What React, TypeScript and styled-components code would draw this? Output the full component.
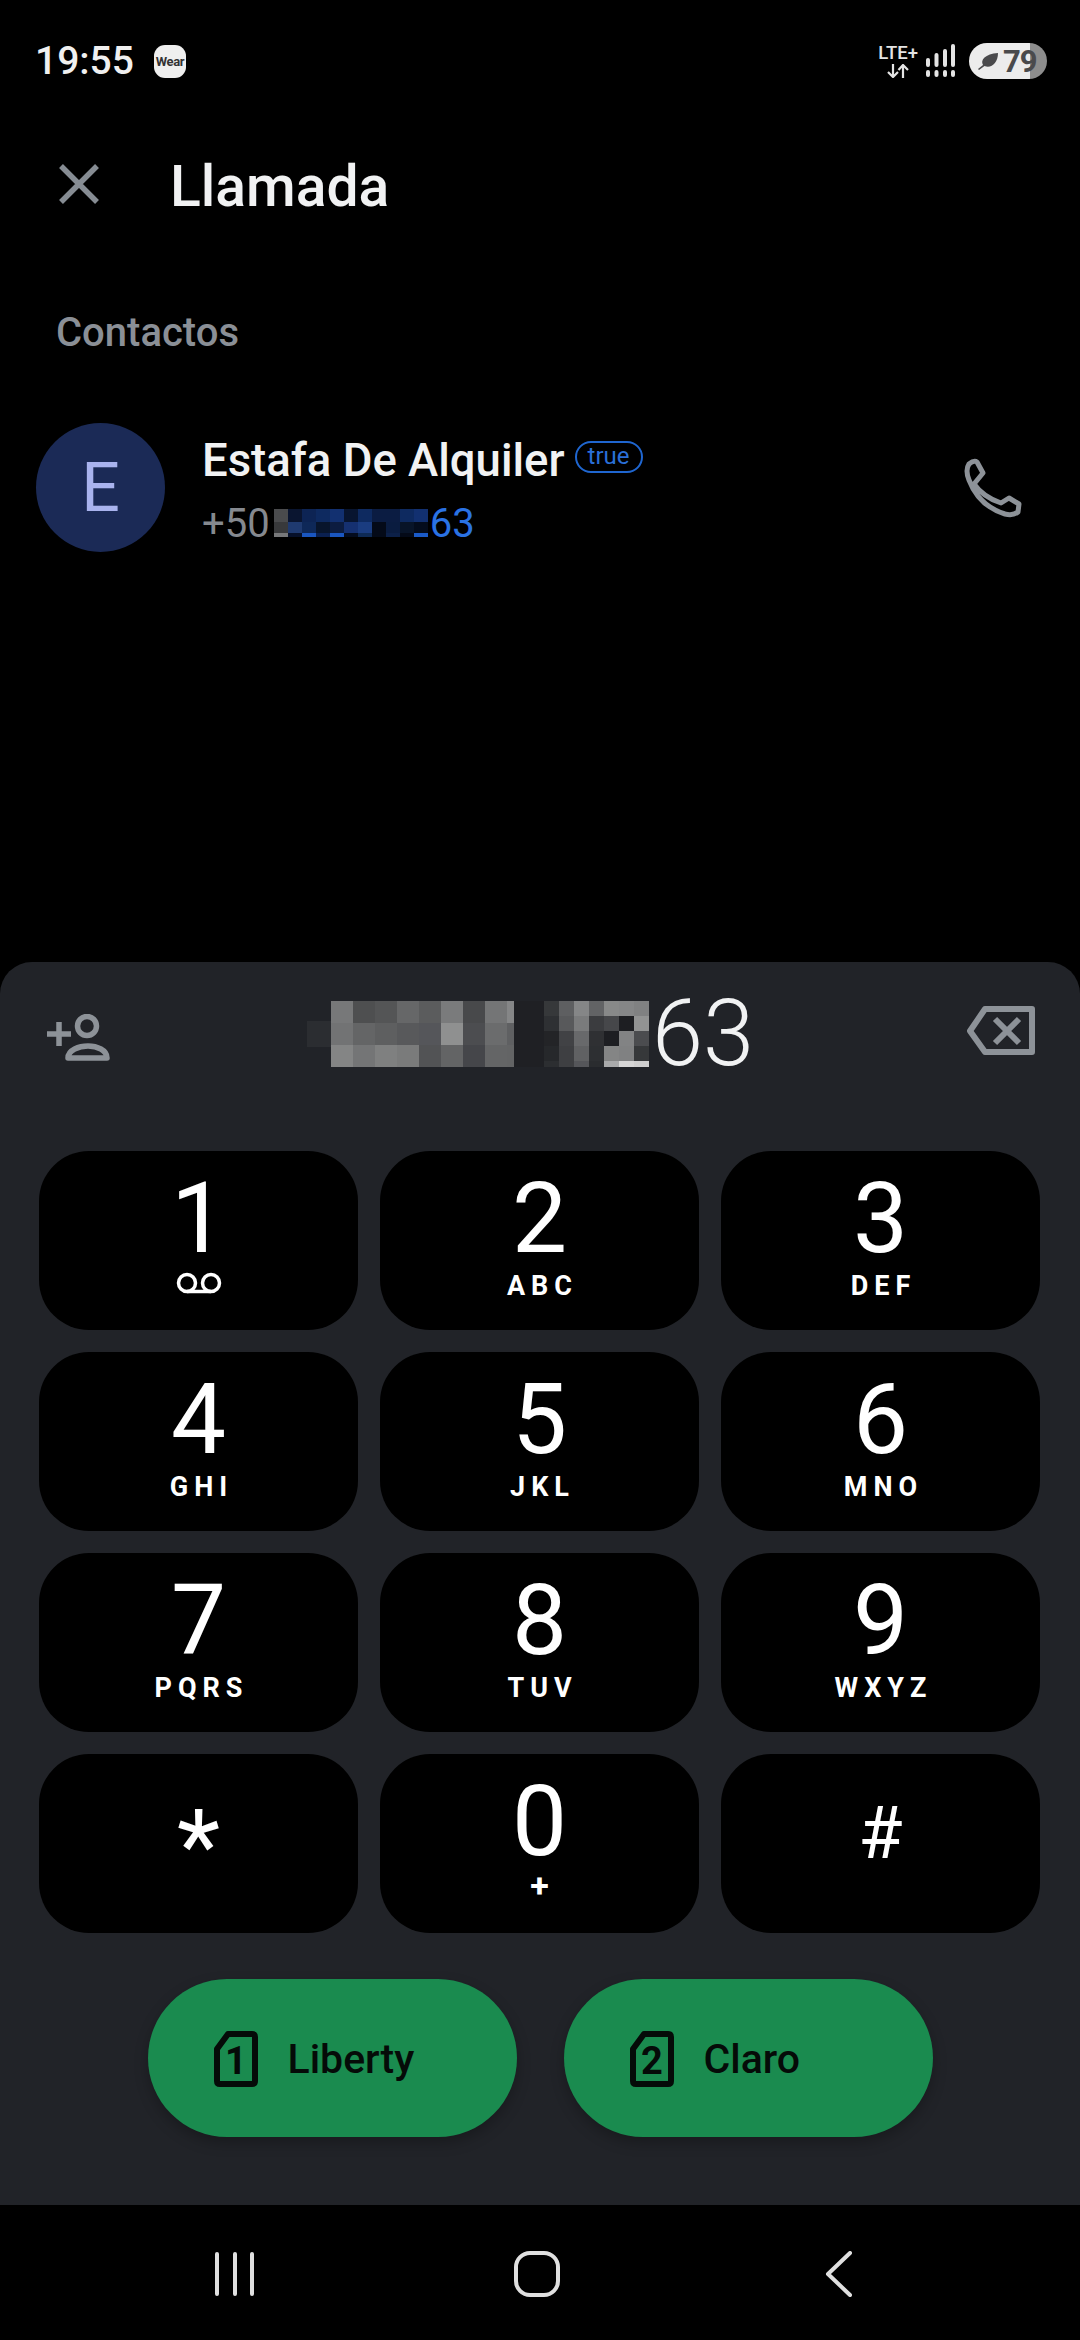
import React from "react";
import styled, { createGlobalStyle } from "styled-components";

const GlobalStyle = createGlobalStyle`
  html, body {
    margin: 0;
    padding: 0;
    background: #000;
  }
  * {
    box-sizing: border-box;
  }
`;

const keys = [
  { digit: "1", voicemail: true },
  { digit: "2", label: "ABC" },
  { digit: "3", label: "DEF" },
  { digit: "4", label: "GHI" },
  { digit: "5", label: "JKL" },
  { digit: "6", label: "MNO" },
  { digit: "7", label: "PQRS" },
  { digit: "8", label: "TUV" },
  { digit: "9", label: "WXYZ" },
  { digit: "*", symbol: "star" },
  { digit: "0", label: "+", plus: true },
  { digit: "#", symbol: "hash" },
];

// blurred part of the dialled number, one array per column
const dialColumnsA = [
  ["#777879", "#727374", "#848585"],
  ["#4e4f50", "#646566", "#747576"],
  ["#545556", "#5e5f60", "#7f8080"],
  ["#666768", "#58595b", "#7a7b7b"],
  ["#5b5c5d", "#55565a", "#525355"],
  ["#7a7b7c", "#8f9090", "#636465"],
  ["#48494b", "#4c4d50", "#45464a"],
  ["#747576", "#6b6c6d", "#646566"],
];
const dialStrip = [["#858687", "#5f6062", "#636465"]];
const dialColumnsB = [
  ["#36383a", "#2e3033", "#232427", "#26282b", "#2c2e31"],
  ["#5e5f61", "#58595b", "#414245", "#3e3f42", "#3e3f42"],
  ["#858687", "#7a7b7c", "#68696b", "#606163", "#55565a"],
  ["#626365", "#3b3c3f", "#2f3033", "#2d2f32", "#2a2c2f"],
  ["#888989", "#46474a", "#1d1e22", "#848585", "#a9aaab"],
  ["#858687", "#1d1e22", "#828384", "#808182", "#d6d6d6"],
  ["#808182", "#929393", "#4b4c4f", "#36383a", "#cfcfcf"],
];
const contactColumns = [
  ["#4a4b4d", "#38393b", "#77787a"],
  ["#0a1530", "#1f3a70", "#06102a"],
  ["#0d2454", "#0e2858", "#1a56c0"],
  ["#0e2a60", "#08152c", "#0a2050"],
  ["#123070", "#0c1c40", "#1a56c0"],
  ["#081530", "#153070", "#040c1e"],
  ["#0e2a60", "#1a3c80", "#0e2a55"],
  ["#0b1c42", "#040a18", "#040a18"],
  ["#0b1c42", "#0a1c40", "#0c2048"],
  ["#0e2a60", "#081428", "#040a18"],
  ["#123070", "#040c1c", "#1a5ac8"],
];

function Blur({ columns, width, rows }: { columns: string[][]; width: number; rows: string }) {
  return (
    <Mosaic $count={columns.length} $width={width} $rows={rows}>
      {columns.flat().map((colour, i) => (
        <Tile key={i} $colour={colour} />
      ))}
    </Mosaic>
  );
}

function SimIcon({ n }: { n: string }) {
  return (
    <svg width="44" height="56" viewBox="0 0 44 56" fill="none">
      <path
        d="M14 3H38Q41 3 41 6V50Q41 53 38 53H6Q3 53 3 50V18Z"
        stroke="#050b08"
        strokeWidth="6"
        strokeLinejoin="round"
      />
      <text x="22" y="43" textAnchor="middle" fontFamily="Roboto" fontWeight="700" fontSize="38" fill="#050b08">
        {n}
      </text>
    </svg>
  );
}

export default function App() {
  return (
    <>
      <GlobalStyle />
      <Page>
        <StatusBar>
          <StatusLeft>
            <Clock>19:55</Clock>
            <WearBadge>Wear</WearBadge>
          </StatusLeft>
          <StatusRight>
            <Network>
              <NetworkLabel>LTE+</NetworkLabel>
              <svg width="22" height="14" viewBox="0 0 22 14" fill="none" stroke="#e4e4e4" strokeWidth="2.200">
                <path d="M6 0V13M1 8L6 13L11 8" />
                <path d="M16 14V1M11.500 6L16 1L21 6" />
              </svg>
            </Network>
            <svg width="30" height="34" viewBox="0 0 30 34" fill="#e4e4e4">
              <rect x="1" y="14" width="4" height="9" rx="2" />
              <rect x="9.500" y="9" width="4" height="14" rx="2" />
              <rect x="18" y="5" width="4" height="18" rx="2" />
              <rect x="26" y="0" width="4" height="23" rx="2" />
              <rect x="1" y="26" width="4" height="7" rx="2" />
              <rect x="9.500" y="26" width="4" height="7" rx="2" />
              <rect x="18" y="26" width="4" height="7" rx="2" />
              <rect x="26" y="26" width="4" height="7" rx="2" />
            </svg>
            <Battery>
              <svg width="22" height="18" viewBox="0 0 22 18" fill="#4a4a4c">
                <path d="M1 17L6 13C3 8 8 2 21 1C21 11 14 17 7.500 14L2 18Z" />
              </svg>
              <BatteryLevel>79</BatteryLevel>
            </Battery>
          </StatusRight>
        </StatusBar>

        <Header>
          <svg width="40" height="40" viewBox="0 0 40 40" stroke="#868c93" strokeWidth="5.500">
            <path d="M2 2L38 38M38 2L2 38" />
          </svg>
          <Title>Llamada</Title>
        </Header>

        <Contacts>
          <SectionLabel>Contactos</SectionLabel>
          <ContactRow>
            <Avatar>E</Avatar>
            <ContactText>
              <NameLine>
                <ContactName>Estafa De Alquiler</ContactName>
                <Tag>true</Tag>
              </NameLine>
              <PhoneLine>
                +50
                <PhoneBlur>
                  <Blur columns={contactColumns} width={14} rows="13px 11px 4px" />
                </PhoneBlur>
                <PhoneMatch>63</PhoneMatch>
              </PhoneLine>
            </ContactText>
            <svg width="64" height="64" viewBox="0 0 64 64" fill="none" stroke="#8d9298" strokeWidth="5" strokeLinejoin="round">
              <path d="M8 8Q13 4 16 6L22 17L13 28Q22 41 40 47L48 42L58 48L57 56Q52 60 44 58Q18 50 8 24Q4 14 8 8Z" />
            </svg>
          </ContactRow>
        </Contacts>

        <Sheet>
          <DialRow>
            <AddContact width="64" height="48" viewBox="0 0 64 48" fill="none" stroke="#8d9298" strokeWidth="5.500">
              <path d="M0 20H24M12 8V32" />
              <circle cx="40" cy="12" r="9.500" />
              <path d="M21 44C21 36 32 32 41 32C50 32 60 36 60 44Z" strokeLinejoin="round" />
            </AddContact>
            <DialNumber>
              <BlurEdge />
              <Blur columns={dialColumnsA} width={22} rows="22px 22px 22px" />
              <Blur columns={dialStrip} width={7} rows="22px 22px 22px" />
              <BlurGap />
              <Blur columns={dialColumnsB} width={15} rows="15px 15px 15px 15px 6px" />
              <DialDigits>63</DialDigits>
            </DialNumber>
            <Backspace width="72" height="54" viewBox="0 0 72 54" fill="none" stroke="#8d9298" strokeWidth="6" strokeLinejoin="round">
              <path d="M5 26L20 4H67V47H20Z" />
              <path d="M30 14L54 38M54 14L30 38" />
            </Backspace>
          </DialRow>

          <Keypad>
            {keys.map((key) => (
              <Key key={key.digit} $symbol={key.symbol}>
                <Digit $symbol={key.symbol}>{key.digit}</Digit>
                {key.voicemail && (
                  <Voicemail width="46" height="22" viewBox="0 0 46 22" fill="none" stroke="#fff" strokeWidth="3.500">
                    <circle cx="11" cy="11" r="8.500" />
                    <circle cx="35" cy="11" r="8.500" />
                    <path d="M11 19.500H35" />
                  </Voicemail>
                )}
                {key.label && <KeyLabel $plus={key.plus}>{key.label}</KeyLabel>}
              </Key>
            ))}
          </Keypad>

          <SimRow>
            <SimButton>
              <SimIcon n="1" />
              Liberty
            </SimButton>
            <SimButton>
              <SimIcon n="2" />
              Claro
            </SimButton>
          </SimRow>
        </Sheet>

        <NavBar>
          <NavSlot>
            <svg width="40" height="44" viewBox="0 0 40 44" stroke="#e0e0e0" strokeWidth="4" strokeLinecap="round">
              <path d="M2 2V42M20 2V42M37 2V42" />
            </svg>
          </NavSlot>
          <NavSlot>
            <svg width="46" height="46" viewBox="0 0 46 46" fill="none" stroke="#e0e0e0" strokeWidth="4">
              <rect x="2" y="2" width="42" height="42" rx="14" />
            </svg>
          </NavSlot>
          <NavSlot>
            <svg width="28" height="46" viewBox="0 0 28 46" fill="none" stroke="#e0e0e0" strokeWidth="4" strokeLinecap="round" strokeLinejoin="round">
              <path d="M25 2L3 23L25 44" />
            </svg>
          </NavSlot>
        </NavBar>
      </Page>
    </>
  );
}

const Page = styled.div`
  width: 1080px;
  height: 2340px;
  display: flex;
  flex-direction: column;
  overflow: hidden;
  background: #000;
  font-family: Roboto, "Liberation Sans", sans-serif;
  color: #f1f2f3;
`;

const StatusBar = styled.div`
  height: 122px;
  flex: none;
  display: flex;
  align-items: center;
  justify-content: space-between;
  padding: 0 33px 0 35px;
`;

const StatusLeft = styled.div`
  display: flex;
  align-items: center;
  gap: 20px;
`;

const Clock = styled.span`
  font-size: 39px;
  font-weight: 500;
  color: #f0f0f0;
`;

const WearBadge = styled.span`
  width: 32px;
  height: 33px;
  border-radius: 11px;
  background: #efefef;
  color: #333;
  font-size: 13px;
  font-weight: 700;
  display: flex;
  align-items: center;
  justify-content: center;
  letter-spacing: -0.4px;
`;

const StatusRight = styled.div`
  display: flex;
  align-items: center;
  gap: 7px;
`;

const Network = styled.div`
  display: flex;
  flex-direction: column;
  align-items: center;
  gap: 2px;
`;

const NetworkLabel = styled.span`
  font-size: 18.500px;
  line-height: 17px;
  font-weight: 500;
  color: #e4e4e4;
`;

const Battery = styled.div`
  width: 78px;
  height: 36px;
  margin-left: 7px;
  border-radius: 18px;
  background: linear-gradient(90deg, #ececec 61px, #8d8d8d 61px);
  display: flex;
  align-items: center;
  gap: 4px;
  padding-left: 8px;
`;

const BatteryLevel = styled.span`
  font-size: 31px;
  font-weight: 700;
  letter-spacing: -1px;
  color: #4a4a4c;
`;

const Header = styled.div`
  height: 124px;
  flex: none;
  display: flex;
  align-items: center;
  gap: 71px;
  padding: 0 0 0 59px;
`;

const Title = styled.h1`
  margin: 4px 0 0;
  font-size: 57px;
  font-weight: 500;
  color: #f1f2f3;
`;

const Contacts = styled.div`
  height: 716px;
  flex: none;
  padding-top: 63px;
`;

const SectionLabel = styled.div`
  height: 48px;
  line-height: 48px;
  padding-left: 56px;
  font-size: 40px;
  font-weight: 500;
  color: #8a8f96;
`;

const ContactRow = styled.div`
  display: flex;
  align-items: center;
  margin-top: 66px;
  padding: 0 55px 0 36px;
`;

const Avatar = styled.div`
  width: 129px;
  height: 129px;
  flex: none;
  border-radius: 50%;
  background: #1b2a56;
  color: #a9b3ee;
  font-size: 68px;
  display: flex;
  align-items: center;
  justify-content: center;
`;

const ContactText = styled.div`
  flex: 1;
  align-self: flex-start;
  margin-left: 37px;
  padding-top: 9px;
`;

const NameLine = styled.div`
  display: flex;
  align-items: center;
  gap: 10px;
  height: 56px;
`;

const ContactName = styled.span`
  font-size: 45.500px;
  font-weight: 500;
  color: #f1f2f3;
`;

const Tag = styled.span`
  height: 32px;
  margin-top: -6px;
  padding: 0 11px;
  border: 2.500px solid #1f66d0;
  border-radius: 16px;
  color: #2a6fd8;
  font-size: 24px;
  line-height: 26px;
`;

const PhoneLine = styled.div`
  display: flex;
  align-items: center;
  height: 56px;
  margin-top: 7px;
  font-size: 40px;
  color: #85898f;
`;

const PhoneBlur = styled.div`
  margin-left: 4px;
`;

const PhoneMatch = styled.span`
  color: #2a72e4;
  margin-left: 2px;
`;

const Mosaic = styled.div<{ $count: number; $width: number; $rows: string }>`
  display: grid;
  grid-auto-flow: column;
  grid-template-rows: ${(p) => p.$rows};
  grid-template-columns: repeat(${(p) => p.$count}, ${(p) => p.$width}px);
`;

const Tile = styled.i.attrs<{ $colour: string }>((p) => ({
  style: { background: p.$colour },
}))<{ $colour: string }>`
  display: block;
`;

const Sheet = styled.div`
  height: 1243px;
  flex: none;
  background: #212328;
  border-radius: 32px 32px 0 0;
`;

const DialRow = styled.div`
  height: 144px;
  margin-bottom: 45px;
  display: flex;
  align-items: center;
  padding: 0 43px 0 47px;
`;

const AddContact = styled.svg`
  flex: none;
  margin: 8px 196px 0 0;
`;

const DialNumber = styled.div`
  flex: 1;
  display: flex;
  align-items: center;
`;

const BlurEdge = styled.div`
  width: 24px;
  height: 26px;
  background: #2b2d31;
`;

const BlurGap = styled.div`
  width: 30px;
  height: 66px;
  background: #1f2024;
`;

const DialDigits = styled.span`
  margin-left: 3px;
  font-size: 92px;
  line-height: 66px;
  font-weight: 350;
  color: #f1f2f3;
`;

const Backspace = styled.svg`
  flex: none;
  margin-top: -4px;
`;

const Keypad = styled.div`
  display: grid;
  grid-template-columns: repeat(3, 319px);
  grid-auto-rows: 179px;
  gap: 22px;
  padding: 0 39px;
`;

const Key = styled.div<{ $symbol?: string }>`
  background: #000;
  border-radius: 50px;
  display: flex;
  flex-direction: column;
  align-items: center;
  padding-top: ${(p) => (p.$symbol ? "0" : "19px")};
  justify-content: ${(p) => (p.$symbol ? "center" : "flex-start")};
`;

const Digit = styled.div<{ $symbol?: string }>`
  font-size: ${(p) => (p.$symbol === "star" ? "100px" : p.$symbol === "hash" ? "72px" : "98px")};
  line-height: 98px;
  font-weight: 400;
  color: #fff;
  ${(p) => p.$symbol === "star" && "margin-top: 4px;"}
  ${(p) => p.$symbol === "hash" && "margin-top: -20px;"}
`;

const KeyLabel = styled.div<{ $plus?: boolean }>`
  margin-top: ${(p) => (p.$plus ? "1px" : "5px")};
  font-size: ${(p) => (p.$plus ? "34px" : "27px")};
  line-height: 27px;
  font-weight: 700;
  letter-spacing: ${(p) => (p.$plus ? "0" : "6px")};
  margin-right: ${(p) => (p.$plus ? "0" : "-6px")};
  color: #fff;
`;

const Voicemail = styled.svg`
  margin-top: 4px;
`;

const SimRow = styled.div`
  display: flex;
  justify-content: center;
  gap: 47px;
  margin-top: 46px;
`;

const SimButton = styled.div`
  width: 369px;
  height: 158px;
  border-radius: 79px;
  background: #1a8b4f;
  box-shadow: 0 6px 14px rgba(0, 0, 0, 0.25);
  display: flex;
  align-items: center;
  gap: 30px;
  padding: 2px 0 0 66px;
  font-size: 41px;
  font-weight: 500;
  color: #050b08;
`;

const NavBar = styled.div`
  height: 135px;
  flex: none;
  display: grid;
  grid-template-columns: repeat(3, 302px);
  padding: 3px 0 0 84px;
`;

const NavSlot = styled.div`
  display: flex;
  align-items: center;
  justify-content: center;
`;
